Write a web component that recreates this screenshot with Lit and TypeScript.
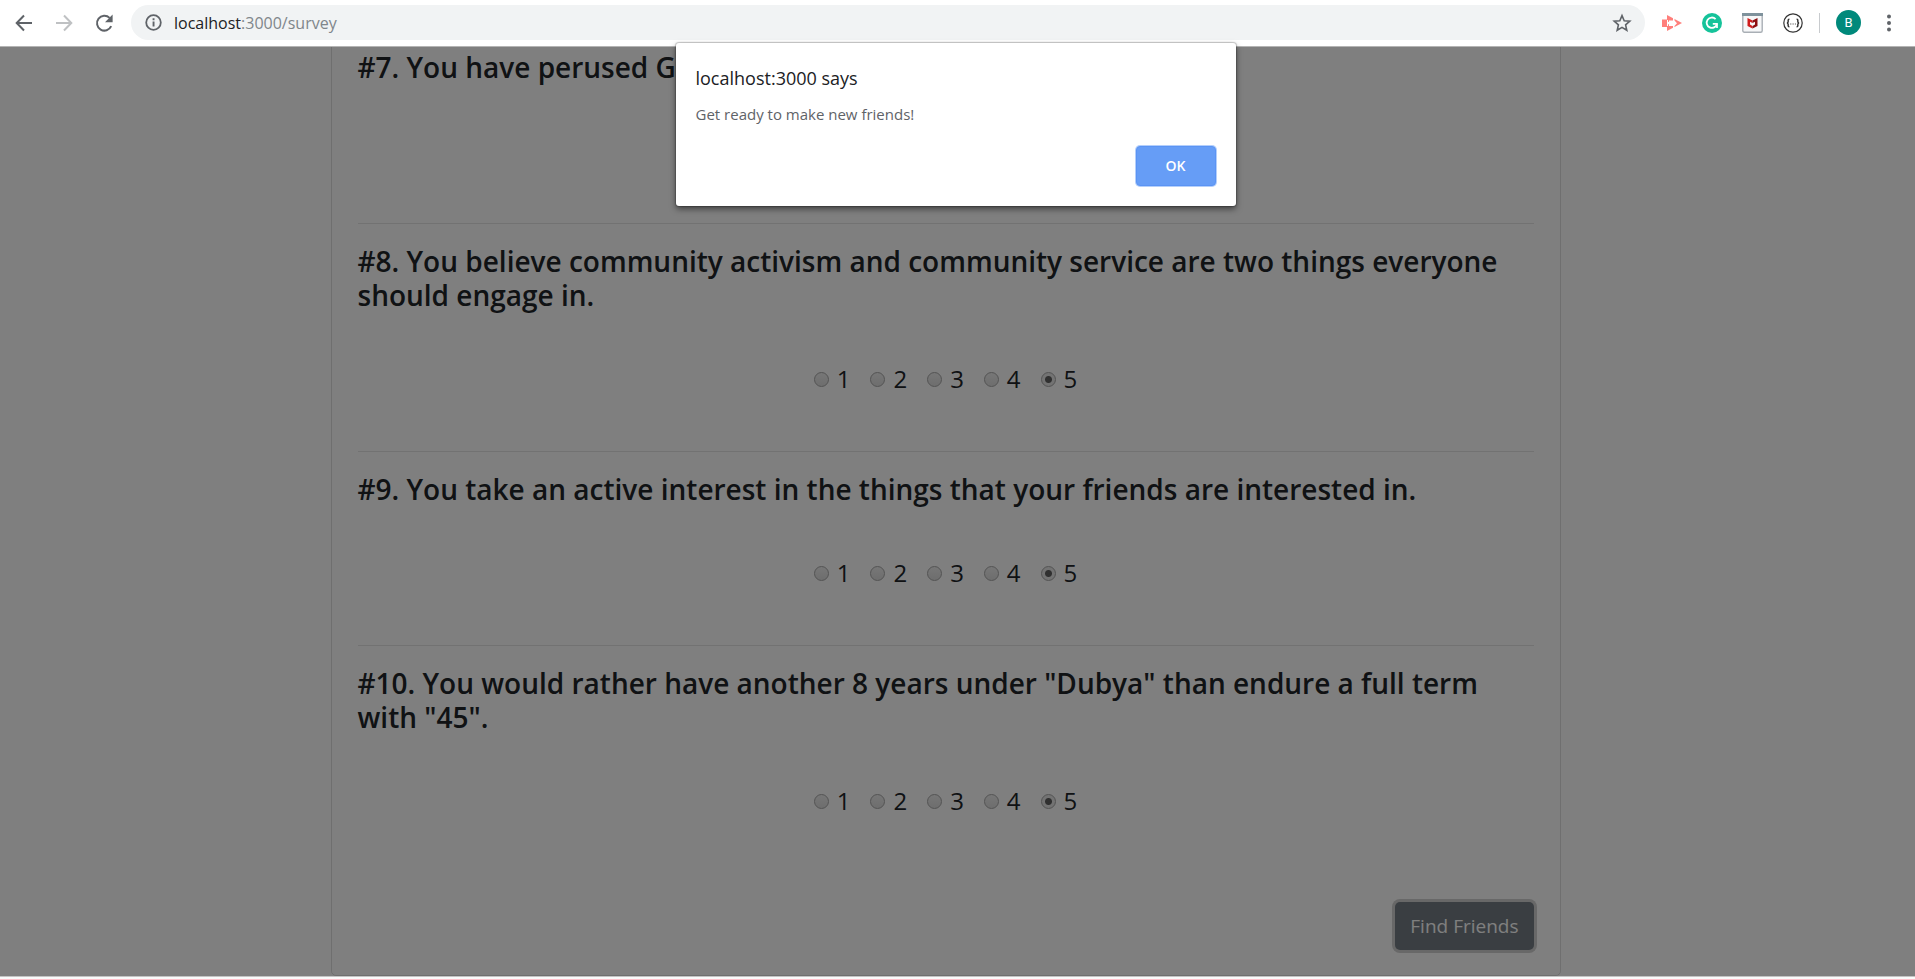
import { LitElement, html, css, svg } from "lit";
import { customElement } from "lit/decorators.js";

const FONT = css`"Open Sans", "Noto Sans", sans-serif`;

@customElement("browser-toolbar")
class BrowserToolbar extends LitElement {
  static styles = css`
    :host {
      display: flex;
      align-items: center;
      box-sizing: border-box;
      height: 47px;
      padding: 0 14px 1px 12px;
      border-bottom: 1px solid #b4b4b4;
      background: #fff;
      font-family: ${FONT};
    }
    button {
      display: flex;
      padding: 0;
      border: 0;
      background: none;
    }
    .nav {
      display: flex;
      gap: 16px;
      margin-right: 15px;
    }
    .omnibox {
      flex: 1;
      display: flex;
      align-items: center;
      gap: 10px;
      height: 35px;
      padding: 0 13px 0 12px;
      border-radius: 18px;
      background: #f1f3f4;
    }
    .url {
      flex: 1;
      font-size: 16px;
      line-height: 24px;
      color: #80868b;
    }
    .host {
      color: #202124;
    }
    .extensions {
      display: flex;
      align-items: center;
      gap: 20px;
      margin-left: 17px;
    }
    .divider {
      width: 1px;
      height: 20px;
      margin: 0 -4px;
      background: #c8cbce;
    }
    .avatar {
      align-items: center;
      justify-content: center;
      width: 25px;
      height: 25px;
      border-radius: 50%;
      background: #00897b;
      color: #fff;
      font: 13px/25px Roboto, sans-serif;
    }
    .menu {
      margin-left: -4px;
    }
  `;

  render() {
    return html`
      <div class="nav">
        <button aria-label="Back">
          <svg width="24" height="24" viewBox="0 0 24 24" fill="none" stroke="#5f6368" stroke-width="2">
            <path d="M20 12H5M12 4.5 4.7 12l7.3 7.5" />
          </svg>
        </button>
        <button aria-label="Forward">
          <svg width="24" height="24" viewBox="0 0 24 24" fill="none" stroke="#bfc1c3" stroke-width="2">
            <path d="M4 12h15M12 4.5l7.3 7.5-7.3 7.5" />
          </svg>
        </button>
        <button aria-label="Reload">
          <svg width="24" height="24" viewBox="0 0 24 24">
            <path d="M19.2 15.2A7.4 7.4 0 1 1 17.6 6.9" fill="none" stroke="#5f6368" stroke-width="2" />
            <path d="M20.6 3.6v7.6H13z" fill="#5f6368" />
          </svg>
        </button>
      </div>
      <div class="omnibox">
        <svg width="21" height="21" viewBox="0 0 21 21">
          <circle cx="10.5" cy="10.5" r="7.3" fill="none" stroke="#5f6368" stroke-width="1.8" />
          <path d="M9.6 9.5h1.9v5H9.6zM9.6 6.3h1.9v1.9H9.6z" fill="#5f6368" />
        </svg>
        <div class="url"><span class="host">localhost</span>:3000/survey</div>
        <button aria-label="Bookmark this page">
          <svg width="20" height="20" viewBox="0 0 20 20">
            <path
              d="M10 2.6l2.2 5.1 5.6.5-4.2 3.7 1.2 5.4L10 14.4l-4.8 2.9 1.2-5.4L2.2 8.2l5.6-.5z"
              fill="none" stroke="#5f6368" stroke-width="1.6" />
          </svg>
        </button>
      </div>
      <div class="extensions">
        <button aria-label="Screen recorder">
          <svg width="20" height="20" viewBox="0 0 20 20">
            <path d="M0 6.5h5.5V14H0zM5 2l15 8-15 8z" fill="#ff7f7b" />
            <path d="M7 7.5h4v-3l1.500.8v2.200l2.500 2.700-2.500 2.800v2l-1.500.8v-2.800H7v-1.500l-1-.5V9l1-.3z" fill="#fff" />
            <path d="M5 7h1v6H5z" fill="#fff" />
          </svg>
        </button>
        <button aria-label="Grammar checker">
          <svg width="20" height="20" viewBox="0 0 20 20">
            <circle cx="10" cy="10" r="10" fill="#15c39a" />
            <path d="M13.6 6.1A5.2 5.2 0 1 0 14.9 11" fill="none" stroke="#fff" stroke-width="1.8" />
            <path d="M10.8 10.9h4.2v4" fill="none" stroke="#fff" stroke-width="1.7" />
          </svg>
        </button>
        <button aria-label="Web protection">
          <svg width="21" height="20" viewBox="0 0 21 20">
            <rect x=".8" y=".8" width="19.4" height="18.4" rx="1.5" fill="#f6f7f8" stroke="#a9afb5" stroke-width="1.4" />
            <path d="M0 0h21v3H0z" fill="#7f929c" />
            <path d="M5.5 5l5 2.6v8l-5-2.6z" fill="#d01c1c" />
            <path d="M15.5 5l-5 2.6v8l5-2.6z" fill="#8c0d10" />
            <path d="M8 8.7l2.5 1.3L13 8.7v2.9l-2.500 1.300L8 11.6z" fill="#f6f7f8" />
          </svg>
        </button>
        <button aria-label="JSON viewer">
          <svg width="20" height="20" viewBox="0 0 20 20" fill="none" stroke="#333" stroke-width="1.2">
            <circle cx="10" cy="10" r="9.2" />
            <path stroke-width="1.5" d="M6.4 6.3c-1.6 0-1.2 1-1.2 2s-.2 1.5-1.2 1.7c1 .2 1.2.7 1.2 1.7s-.4 2 1.2 2M13.6 6.3c1.6 0 1.2 1 1.2 2s.2 1.5 1.2 1.7c-1 .2-1.2.7-1.2 1.7s.4 2-1.2 2" />
            <path stroke-dasharray="1 1.3" d="M7.3 11h5.5" />
          </svg>
        </button>
        <span class="divider"></span>
        <button class="avatar" aria-label="Profile">B</button>
        <button class="menu" aria-label="Menu">
          <svg width="24" height="24" viewBox="0 0 24 24" fill="#5f6368">
            ${[5.5, 12, 18.5].map((y) => svg`<circle cx="12" cy=${y} r="2" />`)}
          </svg>
        </button>
      </div>
    `;
  }
}

const QUESTIONS = [
  { id: 7, text: "You have perused G" },
  {
    id: 8,
    text: "You believe community activism and community service are two things everyone should engage in.",
  },
  { id: 9, text: "You take an active interest in the things that your friends are interested in." },
  { id: 10, text: 'You would rather have another 8 years under "Dubya" than endure a full term with "45".' },
];

@customElement("survey-form")
class SurveyForm extends LitElement {
  static styles = css`
    :host {
      display: block;
      font-family: ${FONT};
      color: #212529;
    }
    .card {
      box-sizing: border-box;
      max-width: 1230px;
      margin: 0 auto;
      padding: 26px;
      padding-bottom: 25px;
      border: 1px solid rgba(0, 0, 0, 0.125);
      border-radius: 5px;
    }
    .question {
      padding-bottom: 54px;
    }
    hr {
      margin: 0 0 20px;
      border: 0;
      border-top: 1px solid rgba(0, 0, 0, 0.1);
    }
    h3 {
      margin: 0 0 49px;
      font-size: 28px;
      font-weight: 600;
      line-height: 34px;
    }
    .options {
      display: flex;
      justify-content: center;
      gap: 20px;
    }
    label {
      display: flex;
      align-items: center;
      gap: 8px;
      font-size: 24px;
      line-height: 36px;
    }
    input {
      appearance: none;
      box-sizing: border-box;
      width: 15px;
      height: 15px;
      margin: 0;
      border: 1px solid #a6a6a6;
      border-radius: 50%;
      background: linear-gradient(#eee, #dcdcdc);
    }
    input:checked {
      background: radial-gradient(circle, #606060 3px, #e6e6e6 4px);
    }
    .actions {
      display: flex;
      justify-content: flex-end;
      margin-top: 29px;
    }
    .submit {
      padding: 0 15px;
      border: 0;
      border-radius: 5px;
      background: #747c84;
      box-shadow: 0 0 0 3px #d0d0d0;
      color: #fff;
      font-family: ${FONT};
      font-size: 19px;
      line-height: 48px;
    }
  `;

  render() {
    return html`
      <form class="card" @submit=${(e: Event) => e.preventDefault()}>
        ${QUESTIONS.map(
          (q) => html`
            <div class="question" role="radiogroup" aria-labelledby="title-${q.id}">
              <hr />
              <h3 id="title-${q.id}">${`#${q.id}. ${q.text}`}</h3>
              <div class="options">
                ${[1, 2, 3, 4, 5].map(
                  (n) => html`<label
                    ><input type="radio" name="q${q.id}" value=${n} ?checked=${n === 5} /><span>${n}</span></label
                  >`
                )}
              </div>
            </div>
          `
        )}
        <div class="actions"><button class="submit" type="submit">Find Friends</button></div>
      </form>
    `;
  }
}

@customElement("alert-dialog")
class AlertDialog extends LitElement {
  static styles = css`
    :host {
      display: flex;
      flex-direction: column;
      box-sizing: border-box;
      padding: 22px 20px 20px;
      border-radius: 3px;
      background: #fff;
      box-shadow: 0 0 1px 1px rgba(0, 0, 0, 0.2), 0 3px 6px rgba(0, 0, 0, 0.5);
      font-family: ${FONT};
    }
    h2 {
      margin: 0 0 12px;
      font-size: 18px;
      font-weight: 400;
      line-height: 26px;
      color: #202124;
    }
    p {
      margin: 0 0 21px;
      font-size: 15px;
      line-height: 22px;
      color: #5f6368;
    }
    button {
      align-self: flex-end;
      width: 80px;
      padding: 0;
      border: 1px solid #5b94f4;
      border-radius: 4px;
      background: #669df6;
      box-shadow: 0 0 0 1px #b4cffb;
      color: #fff;
      font-family: ${FONT};
      font-size: 14px;
      font-weight: 600;
      line-height: 38px;
    }
  `;

  render() {
    return html`
      <h2>localhost:3000 says</h2>
      <p>Get ready to make new friends!</p>
      <button>OK</button>
    `;
  }
}

@customElement("app-root")
class AppRoot extends LitElement {
  static styles = css`
    :host {
      position: relative;
      display: flex;
      flex-direction: column;
      box-sizing: border-box;
      height: 100vh;
      padding-bottom: 2px;
      overflow: hidden;
      background: #fafafa;
    }
    browser-toolbar {
      flex: none;
    }
    .page {
      position: relative;
      flex: 1;
      min-height: 0;
      display: flex;
      flex-direction: column;
      justify-content: flex-end;
      padding-right: 24px;
      border-bottom: 1px solid #c4c4c4;
      overflow: hidden;
      background: #fff;
    }
    .backdrop {
      position: absolute;
      inset: 0;
      background: rgba(0, 0, 0, 0.5);
    }
    .dialog {
      position: absolute;
      top: 43px;
      left: calc(50% - 282px);
      width: 560px;
    }
  `;

  render() {
    return html`
      <browser-toolbar></browser-toolbar>
      <main class="page">
        <survey-form></survey-form>
        <div class="backdrop"></div>
      </main>
      <alert-dialog class="dialog" role="alertdialog" aria-label="localhost:3000 says"></alert-dialog>
    `;
  }
}
